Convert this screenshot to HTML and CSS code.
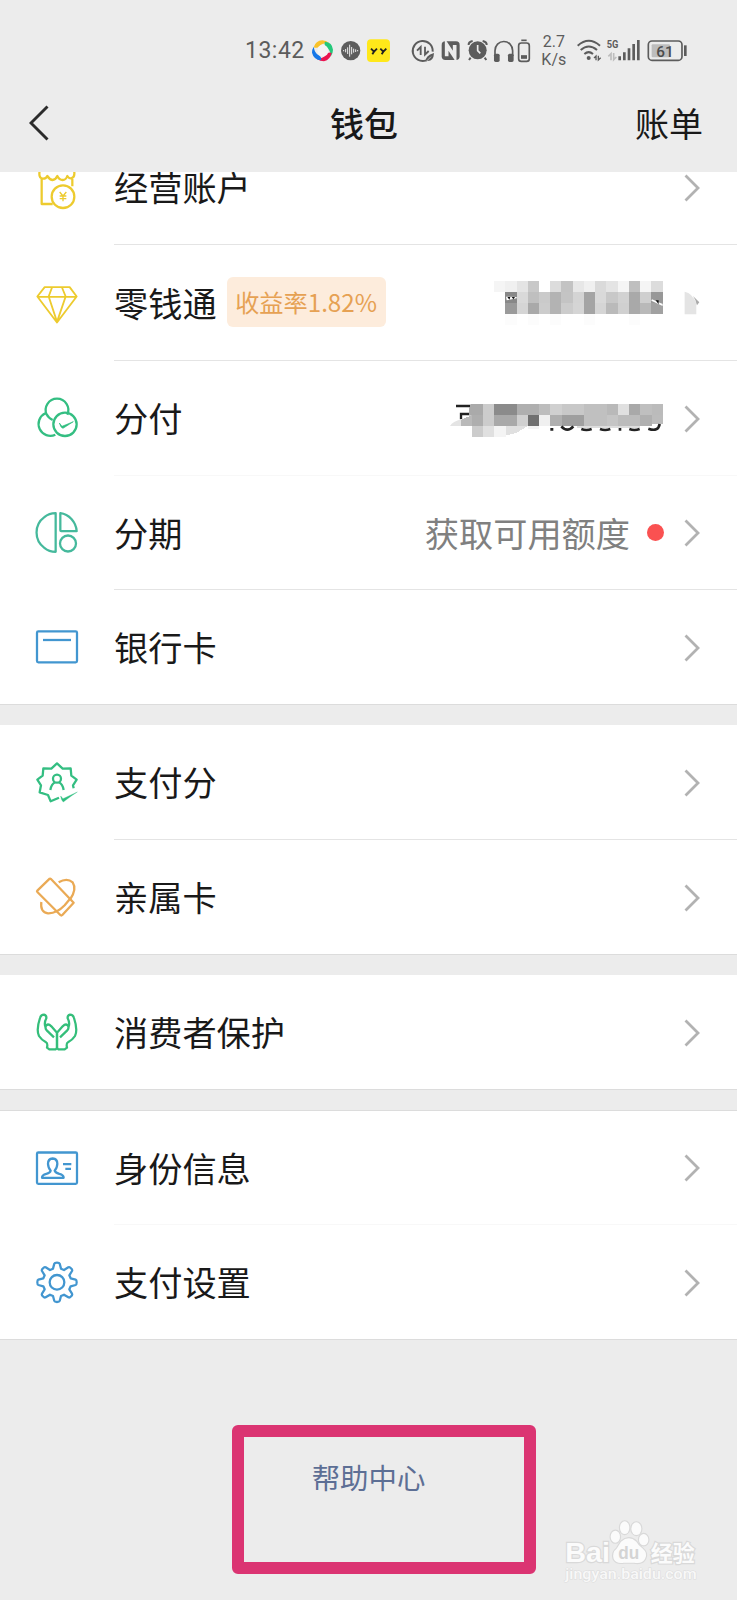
FILE: index.html
```html
<!DOCTYPE html>
<html lang="zh-CN">
<head>
<meta charset="utf-8">
<title>钱包</title>
<link rel="stylesheet" href="styles.css">
</head>
<body>
<header class="top">
  <div class="status">
    <span class="time">13:42</span>
    <svg class="apps" viewBox="225 35 245 80">
      <path d="M236 66q6-20 26-21 12 0 21 9-22-2-32 10-7 6-15 2z" fill="#f9c22b"/>
      <path d="M270 49q22 2 24 24 0 12-7 21 0-20-13-29-8-8-4-16z" fill="#24c87a"/>
      <path d="M290 83q-4 20-23 25-12 0-21-7 20-1 28-14 7-8 16-4z" fill="#ea1550"/>
      <path d="M258 105q-22-2-27-23 0-10 5-18 3 19 15 26 10 6 7 15z" fill="#1677e8"/>
      <path d="M251 64q11-11 25 0 8 12 0 24-11 10-24 1-9-12-1-25z" fill="#f4f4f4"/>
      <circle cx="347" cy="76" r="29" fill="#5c5c5c"/>
      <path d="M326 74v4M332 71v10M338 66v20M344 58v36M350 65v22M356 70v12M362 72v8M368 74v4" stroke="#eee" stroke-width="3"/>
      <rect x="396" y="42" width="69" height="68" rx="12" fill="#ffe81a"/>
      <path d="M408 70l9 9 9-9M417 79l-5 8M436 70l9 9 9-9M445 79l-5 8" fill="none" stroke="#222" stroke-width="5.500"/>
    </svg>
    <svg class="sys" viewBox="525 35 365 80" fill="none" stroke="#5c5c5c">
      <path d="M573 105A30 30 0 1 1 593 79" stroke-width="6"/>
      <path d="M546 76l11-11v24M570 64v24l11-11" stroke-width="5.500"/>
      <path d="M572 109q-2-18 25-26-1 25-20 24" fill="#5c5c5c" stroke="none"/><path d="M574 108l14-14" stroke="#ececec" stroke-width="2"/>
      <rect x="620" y="48" width="54" height="56" rx="11" fill="#5c5c5c" stroke="none"/>
      <path d="M635 93V58l24 36V59" stroke="#ececec" stroke-width="11"/>
      <path d="M631 105V56l30 42M662 47v49l-29-42" stroke-width="0"/>
      <path d="M635 96V59l24 34V57" stroke="#5c5c5c" stroke-width="4.500" opacity="0"/>
      <g transform="translate(690)">
        <circle cx="38" cy="75" r="27" fill="#5c5c5c" stroke="none"/>
        <path d="M11 59q-1-9 12-12M53 47q13 3 12 12M17 97l-5 7M59 97l5 7" stroke-width="6"/>
        <path d="M38 59v17l8 8" stroke="#ececec" stroke-width="5"/>
        <path d="M90 92V76a26 27 0 0 1 53 0v16" stroke-width="5"/>
        <rect x="87" y="85" width="17" height="25" rx="5" fill="#5c5c5c" stroke="none"/>
        <rect x="129" y="85" width="17" height="25" rx="5" fill="#5c5c5c" stroke="none"/>
        <rect x="161" y="53" width="32" height="55" rx="8" stroke-width="5"/>
        <path d="M169 45h16" stroke-width="5"/><path d="M168 95h18" stroke-width="11"/>
      </g>
    </svg>
    <span class="speed">2.7<br>K/s</span>
    <svg class="net" viewBox="330 35 345 80" fill="none" stroke="#5c5c5c">
      <path d="M338 61q33-29 67 0M347 74q24-21 49 0M358 86q13-11 26 0" stroke-width="6"/>
      <circle cx="371" cy="98" r="6" fill="#5c5c5c" stroke="none"/>
      <path d="M387 98l6-6v13M400 91v13l7-7" stroke-width="4"/>
      <text class="g5" x="425" y="69" textLength="35" lengthAdjust="spacingAndGlyphs">5G</text>
      <path d="M430 93l8-8v20M446 83v20l8-8" stroke="#bdbdbd" stroke-width="5"/>
      <path d="M464 105V93M478 105V81M492 105V69M506 105V56M520 105V44" stroke-width="8"/>
      <rect x="550" y="47" width="101" height="58" rx="11" stroke-width="5"/>
      <rect x="560" y="57" width="55" height="39" rx="3" fill="#bdbdbd" stroke="none"/>
      <path d="M661 60v32" stroke-width="8"/>
      <text class="pct" x="574" y="94">61</text>
    </svg>
  </div>
  <nav class="nav">
    <svg class="back" viewBox="0 0 20 36"><path d="M18.500 1.500L2 18l16.500 16.500"/></svg>
    <h1 class="title">钱包</h1>
    <span class="bill">账单</span>
  </nav>
</header>

<main>
<section class="group first">
  <div class="row">
    <svg class="icon yellow" viewBox="99 219 144 144">
      <path d="M119 235l-1 17q0 12 10 14 10 1 14-8 8 12 16 12t14-12q6 12 16 12t14-12q5 8 12 7 10-3 9-16v-14M125 267v75h33M217 267v22"/>
      <circle cx="189" cy="320" r="34"/>
      <path d="M179 306l10 12 10-12M189 318v16M179 318h20M179 326h20" class="thin"/>
    </svg>
    <span class="label">经营账户</span>
    <svg class="chev" viewBox="0 0 16 28"><path d="M1.500 1.500L14 14 1.500 26.500"/></svg>
  </div>
  <div class="row tall">
    <svg class="icon yellow" viewBox="99 55.5 144 144">
      <path d="M134 80h75l21 28-59 78-59-78zM113 109h116M156 81l-10 27 25 76 26-76-11-27" class="mid"/>
    </svg>
    <span class="label">零钱通</span><span class="badge">收益率1.82%</span>
    <svg class="mosaic save" viewBox="190 63 630 134" shape-rendering="crispEdges">
      <path d="M193 63h34v33h-34z" fill="#f5f5f5"/><path d="M227 63h34v33h-34z" fill="#f0f0f0"/><path d="M261 63h33v33h-33z" fill="#e4e4e4"/><path d="M294 63h33v33h-33z" fill="#c8c8c8"/><path d="M361 63h34v33h-34z" fill="#dcdcdc"/><path d="M395 63h34v33h-34z" fill="#c3c3c3"/><path d="M429 63h33v33h-33z" fill="#e7e7e7"/><path d="M462 63h34v33h-34z" fill="#f0f0f0"/><path d="M496 63h34v33h-34z" fill="#dadada"/><path d="M530 63h34v33h-34z" fill="#e4e4e4"/><path d="M564 63h33v33h-33z" fill="#f5f5f5"/><path d="M597 63h34v33h-34z" fill="#bfbfbf"/><path d="M631 63h34v33h-34z" fill="#f5f5f5"/><path d="M665 63h34v33h-34z" fill="#dcdcdc"/>
      <path d="M227 96h34v34h-34z" fill="#888"/><path d="M261 96h33v34h-33z" fill="#d9d9d9"/><path d="M294 96h33v34h-33z" fill="#bfbfbf"/><path d="M327 96h34v34h-34z" fill="#cacaca"/><path d="M361 96h34v34h-34z" fill="#b3b3b3"/><path d="M395 96h34v34h-34z" fill="#c4c4c4"/><path d="M429 96h33v34h-33z" fill="#d4d4d4"/><path d="M462 96h34v67h-34z" fill="#a4a4a4"/><path d="M496 96h34v34h-34z" fill="#d9d9d9"/><path d="M530 96h34v34h-34z" fill="#c8c8c8"/><path d="M564 96h33v34h-33z" fill="#d2d2d2"/><path d="M597 96h34v67h-34z" fill="#a9a9a9"/><path d="M631 96h34v34h-34z" fill="#cfcfcf"/><path d="M665 96h34v34h-34z" fill="#979797"/>
      <path d="M227 130h34v33h-34z" fill="#9a9a9a"/><path d="M261 130h33v33h-33z" fill="#d5d5d5"/><path d="M294 130h33v33h-33z" fill="#a9a9a9"/><path d="M327 130h34v33h-34z" fill="#ccc"/><path d="M361 130h34v33h-34z" fill="#b3b3b3"/><path d="M395 130h34v33h-34z" fill="#ccc"/><path d="M429 130h33v33h-33z" fill="#d5d5d5"/><path d="M496 130h34v33h-34z" fill="#d5d5d5"/><path d="M530 130h34v33h-34z" fill="#bababa"/><path d="M564 130h33v33h-33z" fill="#d0d0d0"/><path d="M631 130h34v33h-34z" fill="#b9b9b9"/><path d="M665 130h34v33h-34z" fill="#a1a1a1"/>
      <path d="M227 163h34v33h-34zM294 163h33v33h-33zM361 163h34v33h-34zM462 163h34v33h-34zM597 163h34v33h-34z" fill="#fcfcfc"/>
      <g shape-rendering="auto"><path d="M229 110l32 1v4l-30 6z" fill="#fff"/><path d="M233 111h9l-3 8zM246 111h10l-5 7z" fill="#111"/>
      <path d="M667 118l32 14v6l-34-16z" fill="#fff"/><path d="M678 121h9v12z" fill="#111"/>
      <path d="M765 95q24 5 35 35v33h-35z" fill="#e4e4e4"/><path d="M790 108l19 19-7 9q-2-15-12-28z" fill="#aaa"/></g>
    </svg>
  </div>
  <div class="row faint">
    <svg class="icon green" viewBox="99 402 144 144">
      <path d="M140 464A34 34 0 1 1 202 464M140 463q5 11 18 17M136 460A34 34 0 1 0 166 524" />
      <circle cx="195" cy="493" r="35"/>
      <path d="M178 489l8 10 34-14q-6 4-31 20-6 0-11-16z" fill="#2dbe7e" stroke-width="2"/>
    </svg>
    <span class="label">分付</span>
    <svg class="mosaic pay" viewBox="60 431 640 106" shape-rendering="crispEdges">
      <g shape-rendering="auto"><path d="M78 440h48M93 480v-16h30" fill="none" stroke="#222" stroke-width="7"/><path d="M60 500q8-14 34-20l32-10v30z" fill="#e4e4e4"/></g>
      <path d="M126 433h33v34h-33z" fill="#aaa"/><path d="M118 445q0-8 8-12v34h-8z" fill="#aaa"/><path d="M159 433h34v34h-34z" fill="#ccc"/><path d="M193 433h68v34h-68z" fill="#8b8b8b"/><path d="M261 433h66v34h-66z" fill="#afafaf"/><path d="M327 433h34v34h-34z" fill="#bdbdbd"/><path d="M361 433h34v34h-34z" fill="#d0d0d0"/><path d="M395 433h67v34h-67z" fill="#c8c8c8"/><path d="M462 433h68v34h-68z" fill="#c0c0c0"/><path d="M530 433h34v34h-34z" fill="#b9b9b9"/><path d="M564 433h33v34h-33z" fill="#e0e0e0"/><path d="M597 433h34v34h-34z" fill="#a9a9a9"/><path d="M631 433h34v34h-34z" fill="#bfbfbf"/><path d="M665 433h34v34h-34z" fill="#bbb"/>
      <path d="M93 482l33-15v33h-33z" fill="#b9b9b9"/><path d="M126 467h33v33h-33z" fill="#aeaeae"/><path d="M159 467h34v33h-34z" fill="#ccc"/><path d="M193 467h68v33h-68z" fill="#a9a9a9"/><path d="M261 467h33v33h-33z" fill="#d0d0d0"/><path d="M294 467h33v33h-33z" fill="#707070"/><path d="M327 467h34v33h-34z" fill="#f0f0f0"/><path d="M361 467h34v33h-34z" fill="#afafaf"/><path d="M395 467h67v33h-67z" fill="#9f9f9f"/><path d="M462 467h68v33h-68z" fill="#c0c0c0"/><path d="M530 467h34v33h-34z" fill="#c5c5c5"/><path d="M564 467h67v33h-67z" fill="#bcbcbc"/><path d="M631 467h34v33h-34z" fill="#b0b0b0"/><path d="M665 467h34v27h-34z" fill="#bcbcbc"/>
      <path d="M126 500h33v33h-33z" fill="#ccc"/><path d="M159 500h34v33h-34z" fill="#e0e0e0"/><path d="M193 500h34v33h-34z" fill="#f4f4f4"/><path d="M227 500h67l-34 20-33 9z" fill="#e0e0e0"/><path d="M294 500h33v10h-33z" fill="#f4f4f4"/>
      <path d="M440 500h191v6H440z" fill="#ddd"/>
      <g shape-rendering="auto" fill="none" stroke="#222" stroke-width="8"><path d="M361 510h9M394 501q18 20 36 0M454 509q15 6 31 0M510 509q15 6 31 0M566 510h8M598 509q15 6 31 0M655 508q30 11 34-14"/></g>
    </svg>
    <svg class="chev" viewBox="0 0 16 28"><path d="M1.500 1.500L14 14 1.500 26.500"/></svg>
  </div>
  <div class="row short">
    <svg class="icon teal" viewBox="99 85.500 144 144">
      <path d="M167 98v116q-20 0-34-12a57 57 0 0 1 0-92q14-12 34-12zM181 98v51q0 3 3 3h46q-1-20-15-36-15-16-34-18z"/>
      <circle cx="204" cy="189" r="24"/>
    </svg>
    <span class="label">分期</span><span class="value">获取可用额度</span><i class="dot"></i>
    <svg class="chev" viewBox="0 0 16 28"><path d="M1.500 1.500L14 14 1.500 26.500"/></svg>
  </div>
  <div class="row last">
    <svg class="icon blue" viewBox="99 429 144 144"><rect x="111" y="454" width="120" height="93" rx="4"/><path d="M129 480h84"/></svg>
    <span class="label">银行卡</span>
    <svg class="chev" viewBox="0 0 16 28"><path d="M1.500 1.500L14 14 1.500 26.500"/></svg>
  </div>
</section>

<section class="group">
  <div class="row">
    <svg class="icon green" viewBox="99 54 144 144">
      <path d="M177 173l-25 11-8-19-25-8 4-21-11-17 16-12 2-22 24 1 17-16 17 16 24-1 2 22 16 12-11 17 2 9"/>
      <circle cx="171" cy="116" r="12"/><path d="M151 150q3-17 14-23M191 150q-3-17-14-23"/>
      <path d="M182 168l7 8 43-20q-15 9-42 30-6-4-8-18z" fill="#2dbe7e" stroke-width="1"/>
    </svg>
    <span class="label">支付分</span>
    <svg class="chev" viewBox="0 0 16 28"><path d="M1.500 1.500L14 14 1.500 26.500"/></svg>
  </div>
  <div class="row last">
    <svg class="icon orange" viewBox="99 399 144 144">
      <path d="M149 416q2-1 4 1l68 71-34 37q-3 3-6 0l-69-69q-2-2 0-4z"/>
      <path d="M176 427q25-15 42 0 13 20-7 50M124 486q-4 31 20 34 26 1 50-24l15-18"/>
    </svg>
    <span class="label">亲属卡</span>
    <svg class="chev" viewBox="0 0 16 28"><path d="M1.500 1.500L14 14 1.500 26.500"/></svg>
  </div>
</section>

<section class="group">
  <div class="row last">
    <svg class="icon hands" viewBox="99 84 144 144">
      <path id="hand" d="M171 207v-49l-17-19q-9-9-15-3-6 7 2 16l21 20M137 142q-6-12 2-27 1-9-7-11-9 0-12 10-12 36-3 54 7 11 21 19 6 3 3 16l7 5h19q4-1 4-6"/>
      <use href="#hand" transform="matrix(-1 0 0 1 342 0)"/>
    </svg>
    <span class="label">消费者保护</span>
    <svg class="chev" viewBox="0 0 16 28"><path d="M1.500 1.500L14 14 1.500 26.500"/></svg>
  </div>
</section>

<section class="group lined">
  <div class="row short faint">
    <svg class="icon blue" viewBox="99 490.500 144 144">
      <rect x="111" y="516" width="120" height="94" rx="4"/>
      <path d="M152 570q-7-6-8-20 0-15 14-16 14 1 14 16-1 14-8 20 1 6 14 10 13 3 13 12h-65q0-9 13-12 12-3 13-10zM189 551h25M196 565h17"/>
    </svg>
    <span class="label">身份信息</span>
    <svg class="chev" viewBox="0 0 16 28"><path d="M1.500 1.500L14 14 1.500 26.500"/></svg>
  </div>
  <div class="row last">
    <svg class="icon blue" viewBox="99 114 144 144">
      <path d="M163 131q1-3 8-3t8 3l4 15 9 4 13-8q4-2 8 3 5 4 3 8l-8 13 4 9 15 4q3 1 3 8t-3 8l-15 4-4 9 8 13q2 4-3 8-4 5-8 3l-13-8-9 4-4 15q-1 3-8 3t-8-3l-4-15-9-4-13 8q-4 2-8-3-5-4-3-8l8-13-4-9-15-4q-3-1-3-8t3-8l15-4 4-9-8-13q-2-4 3-8 4-5 8-3l13 8 9-4z"/>
      <circle cx="171" cy="187" r="22"/>
    </svg>
    <span class="label">支付设置</span>
    <svg class="chev" viewBox="0 0 16 28"><path d="M1.500 1.500L14 14 1.500 26.500"/></svg>
  </div>
</section>
</main>

<footer class="foot">
  <a class="help">帮助中心</a>
  <div class="frame"></div>
  <svg class="mark" viewBox="1020 320 430 210">
    <g fill="#fbfbfb" stroke="#d9d9d9" stroke-width="7" paint-order="stroke">
      <text x="1036" y="456" class="bai" textLength="134" lengthAdjust="spacingAndGlyphs">Bai</text>
      <ellipse cx="1186" cy="379" rx="14" ry="18"/><ellipse cx="1214" cy="352" rx="14" ry="19"/><ellipse cx="1249" cy="355" rx="15" ry="19"/><ellipse cx="1271" cy="388" rx="14" ry="17"/>
      <path d="M1203 394q24-20 46 0 6 11 18 20 18 15 8 32-9 16-33 11h-30q-23 4-31-11-6-19 10-32z"/>
      <text x="1292" y="451" class="jy">经验</text>
    </g>
    <text x="1195" y="446" class="du" textLength="63" lengthAdjust="spacingAndGlyphs">du</text>
    <text x="1036" y="506" class="url" textLength="394" lengthAdjust="spacingAndGlyphs">jingyan.baidu.com</text>
  </svg>
</footer>
</body>
</html>
```
FILE: styles.css
```css
* { box-sizing: border-box; }
body {
  margin: 0;
  width: 737px;
  height: 1600px;
  overflow: hidden;
  background: #ececec;
  color: #191919;
  font-family: "Noto Sans CJK SC", sans-serif;
}
svg { display: block; flex: none; }
.top { height: 172px; background: #ececec; position: relative; z-index: 1; }
.status { height: 75px; display: flex; padding: 25px 0 0 245px; color: #5c5c5c; font-family: Roboto, sans-serif; }
.time { width: 65px; font-size: 23px; line-height: 52px; letter-spacing: .5px; }
.apps { width: 81.670px; height: 26.670px; margin-top: 11.670px; }
.sys { width: 121.670px; height: 26.670px; margin: 11.670px 0 0 18.330px; }
.speed { width: 43.330px; padding: 8px 0 0 1px; font-size: 16px; line-height: 18px; text-align: center; }
.net { width: 115px; height: 26.670px; margin-top: 11.670px; }
.g5 { font: 700 34px Roboto, sans-serif; fill: #5c5c5c; stroke: none; }
.pct { font: 500 46px Roboto, sans-serif; fill: #4c4c4c; stroke: none; }
.nav { height: 97px; display: grid; grid-template-columns: 1fr auto 1fr; align-items: center; padding: 0 38px 2px 29px; }
.back { width: 20px; height: 36px; fill: none; stroke: #2b2b2b; stroke-width: 2.900; }
.title { margin: 0; font-size: 34px; line-height: 50px; font-weight: 500; }
.bill { justify-self: end; margin-right: -4px; font-size: 34px; line-height: 50px; }
.group { margin-bottom: 20px; background: #fff; }
.first { height: 533px; overflow: hidden; }
.first .row:first-child { margin-top: -42px; }
.lined { border-top: 1px solid #dcdcdc; }
.row { position: relative; height: 115px; display: flex; align-items: center; padding: 0 37px 1px 33px; }
.row::after { content: ""; position: absolute; left: 114px; right: 0; bottom: 0; height: 1px; background: #e4e4e4; }
.tall { height: 116px; }
.short { height: 114px; }
.faint::after { background: #f8f8f8; }
.last::after { left: 0; background: #dcdcdc; }
.icon { width: 48px; height: 48px; margin-right: 33px; overflow: visible; fill: none; stroke-width: 6.800; stroke-linejoin: round; }
.yellow { stroke: #edcb2e; }
.green { stroke: #34be82; }
.teal { stroke: #45b99c; }
.blue { stroke: #4296d0; }
.orange { stroke: #eaaa55; }
.hands { stroke: #34be7a; }
.thin { stroke-width: 4; }
.mid { stroke-width: 5.500; }
.label { margin-bottom: 2px; font-size: 34.200px; line-height: 50px; white-space: nowrap; }
.badge { width: 159px; height: 50px; margin: 0 0 1px 10px; border-radius: 6px; background: #fdecdc; color: #e6a153; font-size: 24.200px; line-height: 49px; text-align: center; white-space: nowrap; }
.chev { width: 16px; height: 28px; margin: 1px 0 0 auto; fill: none; stroke: #b2b2b2; stroke-width: 2.800; }
.mosaic { width: 210px; height: 44.670px; margin-left: auto; }
.save { margin-right: -3.330px; margin-top: 2px; }
.pay { width: 213.330px; height: 35.330px; margin-top: 6px; }
.pay + .chev { margin-left: 21px; }
.value { margin: 0 0 2px auto; color: #808080; font-size: 34.200px; line-height: 50px; }
.dot { width: 17px; height: 17px; margin-left: 17px; border-radius: 50%; background: #fa5151; }
.dot + .chev { margin-left: 20px; }
.foot { text-align: center; padding-top: 96px; }
.help { color: #5d6f95; font-size: 28.400px; line-height: 42px; }
.frame { position: absolute; left: 232px; top: 1425px; width: 304px; height: 149px; border: 12px solid #db3472; border-radius: 6px; }
.mark { position: absolute; left: 560px; top: 1516.670px; width: 143.330px; height: 70px; }
.bai { font: 700 84px "Liberation Sans", sans-serif; }
.jy { font: 700 66px "Noto Sans CJK SC", sans-serif; }
.du { font: 700 54px "Liberation Sans", sans-serif; fill: #d4d4d4; }
.url { font: 500 42px Roboto, sans-serif; fill: #f8f8f8; stroke: #dcdcdc; stroke-width: 3; paint-order: stroke; }
```
